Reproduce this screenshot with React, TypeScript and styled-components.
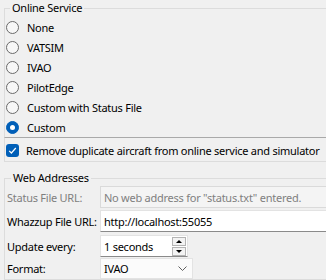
import React from "react";
import styled, { createGlobalStyle } from "styled-components";

const Global = createGlobalStyle`
  html, body { margin: 0; padding: 0; background: #f0f0f0; overflow: hidden; }
  body { font-family: "Noto Sans", "Open Sans", sans-serif; font-size: 11px; letter-spacing: -0.25px; color: #000; }
`;

const Page = styled.div`
  width: 346px;
  padding-top: 8px;
  display: flex;
  flex-direction: column;
`;

const GroupBox = styled.div<{ $mt?: number; $bottom?: string }>`
  margin: ${(p) => p.$mt ?? 0}px 0 0 4px;
  border: 1px solid #dcdcdc;
  border-bottom-color: ${(p) => p.$bottom ?? "#dcdcdc"};
  display: flex;
  flex-direction: column;
`;

const GroupTitle = styled.div<{ $ml: number }>`
  margin: -9px 0 0 ${(p) => p.$ml}px;
  padding: 0 2px;
  background: #f0f0f0;
  line-height: 16px;
  width: fit-content;
`;

const RadioList = styled.div`
  padding: 1px 0 0 1px;
  display: flex;
  flex-direction: column;
`;

const OptionRow = styled.label`
  height: 20px;
  display: flex;
  align-items: center;
  gap: 8px;
  white-space: nowrap;
`;

const RadioCircle = styled.span<{ $checked?: boolean }>`
  box-sizing: border-box;
  width: 13px;
  height: 13px;
  border-radius: 50%;
  border: 1px solid ${(p) => (p.$checked ? "#005fb8" : "#6a6a6a")};
  background: ${(p) => (p.$checked ? "#005fb8" : "#f7f7f7")};
  display: flex;
  align-items: center;
  justify-content: center;
  &::after {
    content: "";
    display: ${(p) => (p.$checked ? "block" : "none")};
    width: 5px;
    height: 5px;
    border-radius: 50%;
    background: #fff;
  }
`;

const CheckFrame = styled.div`
  margin-left: 4px;
  height: 22px;
  border-left: 1px solid #dcdcdc;
  border-bottom: 1px solid #dcdcdc;
  padding: 1px 0 0 1px;
  box-sizing: content-box;
  display: flex;
  align-items: center;
`;

const CheckRow = styled.label`
  display: flex;
  align-items: center;
  gap: 7px;
  white-space: nowrap;
`;

const CheckBox = styled.span`
  width: 13px;
  height: 13px;
  border-radius: 3px;
  background: #005fb8;
  display: flex;
  align-items: center;
  justify-content: center;
`;

const Form = styled.div`
  padding: 0 0 0 2px;
  display: flex;
  flex-direction: column;
`;

const FieldRow = styled.div<{ $h: number; $mb: number }>`
  height: ${(p) => p.$h}px;
  margin-bottom: ${(p) => p.$mb}px;
  display: flex;
  align-items: center;
`;

const Label = styled.span<{ $disabled?: boolean }>`
  width: 93px;
  flex: none;
  color: ${(p) => (p.$disabled ? "#7f7f7f" : "#000")};
  white-space: nowrap;
`;

const TextInput = styled.div<{ $disabled?: boolean }>`
  box-sizing: border-box;
  flex: 1;
  height: 100%;
  padding: 0 3px;
  display: flex;
  align-items: center;
  white-space: nowrap;
  background: ${(p) => (p.$disabled ? "#f4f4f4" : "#ffffff")};
  border: 1px solid ${(p) => (p.$disabled ? "#dadada" : "#e3e3e3")};
  border-bottom-color: ${(p) => (p.$disabled ? "#dadada" : "#8a8a8a")};
  color: ${(p) => (p.$disabled ? "#808080" : "#000")};
`;

const SpinBox = styled.div`
  box-sizing: border-box;
  width: 88px;
  height: 100%;
  background: #fff;
  border: 1px solid #e3e3e3;
  border-bottom-color: #8a8a8a;
  display: flex;
  align-items: center;
  padding: 0 1px 0 3px;
`;

const SpinText = styled.span`
  flex: 1;
`;

const SpinButtons = styled.div`
  display: flex;
  flex-direction: column;
  gap: 1px;
`;

const SpinButton = styled.span<{ $up?: boolean }>`
  box-sizing: border-box;
  width: 14px;
  height: 9px;
  border: 1px solid #b4b4b4;
  background: #f3f3f3;
  display: flex;
  align-items: center;
  justify-content: center;
  &::after {
    content: "";
    width: 0;
    height: 0;
    border-left: 3px solid transparent;
    border-right: 3px solid transparent;
    ${(p) => (p.$up ? "border-bottom: 3px solid #000;" : "border-top: 3px solid #000;")}
  }
`;

const Combo = styled.div`
  box-sizing: border-box;
  width: 93px;
  height: 100%;
  background: #fbfbfb;
  border: 1px solid #e3e3e3;
  display: flex;
  align-items: center;
  justify-content: space-between;
  padding: 0 5px 0 3px;
`;

const radios = ["None", "VATSIM", "IVAO", "PilotEdge", "Custom with Status File", "Custom"];

export default function App() {
  return (
    <>
      <Global />
      <Page>
        <GroupBox $bottom="#a9a9a9">
          <GroupTitle $ml={5}>Online Service</GroupTitle>
          <RadioList>
            {radios.map((r) => (
              <OptionRow key={r}>
                <RadioCircle $checked={r === "Custom"} />
                {r}
              </OptionRow>
            ))}
          </RadioList>
        </GroupBox>
        <CheckFrame>
          <CheckRow>
            <CheckBox>
              <svg width="9" height="9" viewBox="0 0 9 9">
                <polyline points="1.2,4.8 3.4,7 7.8,2" fill="none" stroke="#fff" strokeWidth="1.2" />
              </svg>
            </CheckBox>
            Remove duplicate aircraft from online service and simulator
          </CheckRow>
        </CheckFrame>
        <GroupBox $mt={16}>
          <GroupTitle $ml={6}>Web Addresses</GroupTitle>
          <Form>
            <FieldRow $h={22} $mb={2}>
              <Label $disabled>Status File URL:</Label>
              <TextInput $disabled>No web address for "status.txt" entered.</TextInput>
            </FieldRow>
            <FieldRow $h={22} $mb={3}>
              <Label>Whazzup File URL:</Label>
              <TextInput>http://localhost:55055</TextInput>
            </FieldRow>
            <FieldRow $h={22} $mb={1}>
              <Label>Update every:</Label>
              <SpinBox>
                <SpinText>1 seconds</SpinText>
                <SpinButtons>
                  <SpinButton $up />
                  <SpinButton />
                </SpinButtons>
              </SpinBox>
            </FieldRow>
            <FieldRow $h={21} $mb={0}>
              <Label>Format:</Label>
              <Combo>
                IVAO
                <svg width="9" height="5" viewBox="0 0 9 5">
                  <polyline points="0.5,0.5 4.5,4.5 8.5,0.5" fill="none" stroke="#606060" strokeWidth="1" />
                </svg>
              </Combo>
            </FieldRow>
          </Form>
        </GroupBox>
      </Page>
    </>
  );
}
